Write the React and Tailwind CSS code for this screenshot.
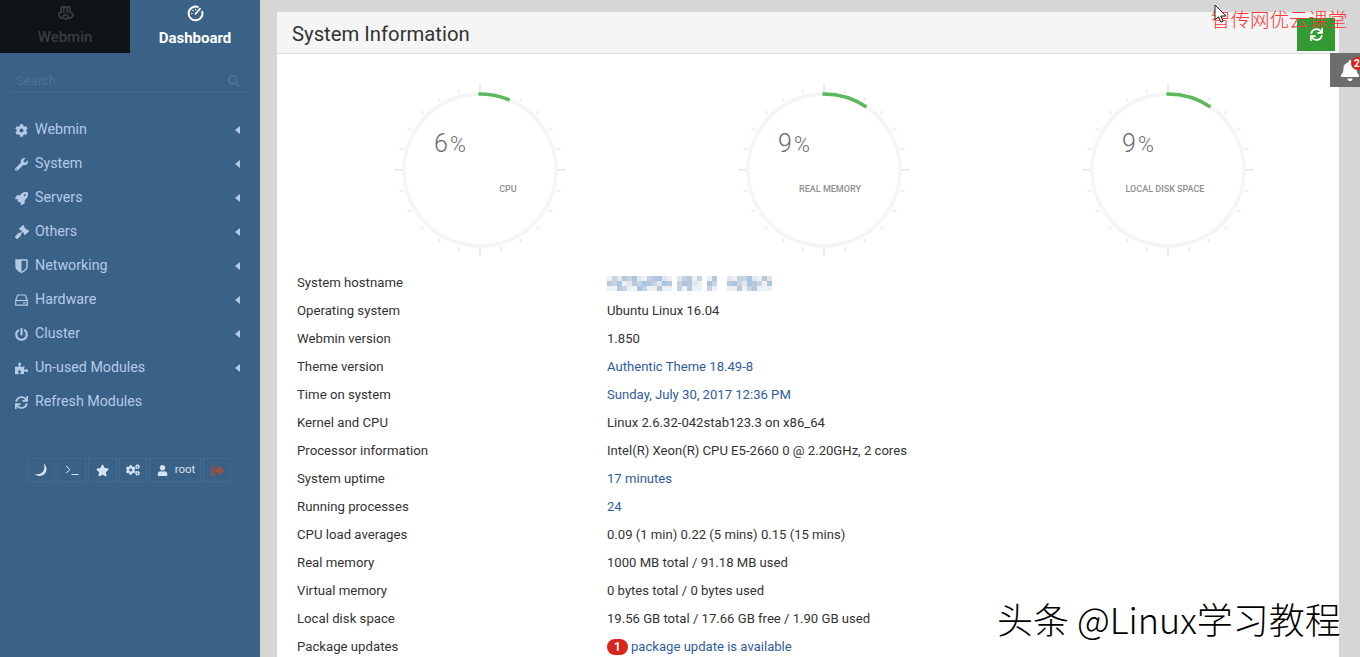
import {
  FaCog, FaWrench, FaRocket, FaGavel, FaPowerOff, FaPuzzlePiece, FaSync,
  FaStar, FaCogs, FaUser, FaSignOutAlt, FaBell, FaSearch,
} from 'react-icons/fa';

const ShieldIcon = () => (
  <svg width="13" height="14" viewBox="0 0 13 14">
    <path d="M1 1h11v6c0 3-3 5.2-5.5 6.3C4 12.2 1 10 1 7z" fill="none" stroke="currentColor" strokeWidth="1.4" />
    <path d="M1 1h5.5v12.3C4 12.2 1 10 1 7z" fill="currentColor" />
  </svg>
);

const HddIcon = () => (
  <svg width="13" height="12" viewBox="0 0 13 12" fill="none" stroke="currentColor" strokeWidth="1.2">
    <path d="M2.6 1h7.8l1.9 5.5v4.7H.7V6.5z" />
    <path d="M.7 6.5h11.6" />
    <path d="M8 8.9h2.6" />
  </svg>
);

const WebminLogo = () => (
  <svg width="19" height="16" viewBox="0 0 17 16" fill="none" stroke="currentColor" strokeWidth="1.8">
    <path d="M4.5 1h8l.7 5.2c2.2.6 3 2 2.5 3.8-.6 1.9-2.6 2.6-4.2 1.7-.8 1.7-4.2 1.7-5 0-1.6.9-3.6.2-4.2-1.7C1.3 8.2 2.1 6.8 3.8 6.2z" />
    <path d="M7 1.5 6.5 7M10 1.5 10.5 7M5.500 10.500 8.500 8.500 11.500 10.500" />
  </svg>
);

const DashIcon = () => (
  <svg width="17" height="17" viewBox="0 0 17 17" fill="none" stroke="currentColor">
    <path d="M11.5 2.2A6.9 6.9 0 1 0 15 6" strokeWidth="2" />
    <path d="M8 9.5 13.500 3.200" strokeWidth="1.8" />
    <path d="M4 8.500h1.500M5.500 5 6.500 6M8.500 3.800v1.500" strokeWidth="1.2" />
  </svg>
);

const MoonIcon = () => (
  <svg width="14" height="14" viewBox="0 0 13 13">
    <path d="M9 .5c3 2.500 3.500 6.500 1.200 9.300C8 12.600 3.500 13 .8 10.200 4.500 11 7.500 9.800 8.800 7.200 9.800 5 9.800 2.800 9 .5z" fill="currentColor" />
  </svg>
);

const TerminalIcon = () => (
  <svg width="14" height="10" viewBox="0 0 14 10" fill="none" stroke="currentColor" strokeWidth="1">
    <path d="M1 1l4 3.500L1 8M6.500 9.500H13.500" />
  </svg>
);

const CaretIcon = () => (
  <svg width="5" height="8" viewBox="0 0 5 8"><path d="M5 0v8L0 4z" fill="currentColor" /></svg>
);

const menu = [
  { label: 'Webmin', icon: <FaCog className="text-[13px]" />, arrow: true },
  { label: 'System', icon: <FaWrench className="text-[13px]" />, arrow: true },
  { label: 'Servers', icon: <FaRocket className="text-[13px]" />, arrow: true },
  { label: 'Others', icon: <FaGavel className="text-[14px]" />, arrow: true },
  { label: 'Networking', icon: <ShieldIcon />, arrow: true },
  { label: 'Hardware', icon: <HddIcon />, arrow: true },
  { label: 'Cluster', icon: <FaPowerOff className="text-[13px]" />, arrow: true },
  { label: 'Un-used Modules', icon: <FaPuzzlePiece className="text-[13px]" />, arrow: true },
  { label: 'Refresh Modules', icon: <FaSync className="text-[13px]" /> },
];

const rows = [
  { label: 'System hostname', blur: true },
  { label: 'Operating system', value: 'Ubuntu Linux 16.04' },
  { label: 'Webmin version', value: '1.850' },
  { label: 'Theme version', value: 'Authentic Theme 18.49-8', link: true },
  { label: 'Time on system', value: 'Sunday, July 30, 2017 12:36 PM', link: true },
  { label: 'Kernel and CPU', value: 'Linux 2.6.32-042stab123.3 on x86_64' },
  { label: 'Processor information', value: 'Intel(R) Xeon(R) CPU E5-2660 0 @ 2.20GHz, 2 cores' },
  { label: 'System uptime', value: '17 minutes', link: true },
  { label: 'Running processes', value: '24', link: true },
  { label: 'CPU load averages', value: '0.09 (1 min) 0.22 (5 mins) 0.15 (15 mins)' },
  { label: 'Real memory', value: '1000 MB total / 91.18 MB used' },
  { label: 'Virtual memory', value: '0 bytes total / 0 bytes used' },
  { label: 'Local disk space', value: '19.56 GB total / 17.66 GB free / 1.90 GB used' },
  { label: 'Package updates', pkg: true },
];

const gauges = [
  { value: 6, sweep: 23, label: 'CPU', labelClass: 'left-[94px] w-[40px]' },
  { value: 9, sweep: 34, label: 'REAL MEMORY', labelClass: 'left-[52px] w-[80px]' },
  { value: 9, sweep: 34, label: 'LOCAL DISK SPACE', labelClass: 'left-[33px] w-[100px]' },
];

// pixelated hostname: one string per row of 5px blocks
const blocks = [
  '4102130412304 01241 42  041130420',
  '2134021321032 13204 31  231032143',
  '4421443144244 14244 14  442412444',
];
const blockColors = { 0: '#dfe6ef', 1: '#c8d3e2', 2: '#b9c7da', 3: '#a8c6e2', 4: '#edf1f6' };

function Gauge({ value, sweep, label, labelClass }) {
  const ticks = Array.from({ length: 24 }, (_, i) => i * 15);
  const r = 76;
  const end = (sweep * Math.PI) / 180;
  const startX = -1.5;
  return (
    <div className="relative h-[172px] w-[172px] mx-auto">
      <svg width="172" height="172" viewBox="-86 -86 172 172">
        <circle r={r} fill="none" stroke="#f5f5f5" strokeWidth="4" />
        {ticks.map((a) => (
          <line
            key={a}
            x1="0"
            x2="0"
            y1={a % 90 === 0 ? -78 : -79.5}
            y2={a % 90 === 0 ? -86 : -83.5}
            stroke={a % 90 === 0 ? '#d8d8d8' : '#e2e2e2'}
            strokeWidth="1"
            transform={`rotate(${a})`}
          />
        ))}
        <path
          d={`M${startX} ${-r} A${r} ${r} 0 0 1 ${r * Math.sin(end)} ${-r * Math.cos(end)}`}
          fill="none"
          stroke="#5cb85c"
          strokeWidth="3.5"
        />
      </svg>
      <div className="absolute top-[45px] left-[40px] text-[#6b6b6b] flex items-baseline">
        <span className="text-[25px] leading-[30px] font-light">{value}</span>
        <span className="ml-[2px] text-[21.5px] leading-[30px] font-light">%</span>
      </div>
      <div className={`absolute top-[99px] text-center text-[9px] leading-[12px] font-medium text-[#8f8f8f] whitespace-nowrap ${labelClass}`}>
        {label}
      </div>
    </div>
  );
}

function Sidebar() {
  const btn = 'h-[24px] border border-[#436b90] flex items-center justify-center';
  return (
    <aside className="w-[260px] shrink-0 bg-[#3a6186] flex flex-col">
      <div className="flex h-[53px]">
        <div className="w-[130px] bg-[#0f1416] flex flex-col items-center text-[#383d42]">
          <div className="mt-[6px]"><WebminLogo /></div>
          <span className="mt-[5px] text-[15px] leading-[20px] font-medium">Webmin</span>
        </div>
        <div className="w-[130px] flex flex-col items-center text-white">
          <div className="mt-[5px]"><DashIcon /></div>
          <span className="mt-[6px] text-[15px] leading-[20px] font-bold">Dashboard</span>
        </div>
      </div>

      <div className="mx-[10px] mt-[16px] h-[24px] border-b border-[#436b90] flex items-center justify-between pl-[6px] pr-[10px]">
        <span className="text-[13px] text-[#4c7397]">Search</span>
        <FaSearch className="text-[12px] text-[#4c7397]" />
      </div>

      <nav className="mt-[20px]">
        {menu.map(({ label, icon, arrow }) => (
          <div key={label} className="h-[34px] flex items-center pl-[15px] pr-[20px] text-[#b3cbe6]">
            <span className="w-[20px] flex">{icon}</span>
            <span className="text-[14.25px] flex-1">{label}</span>
            {arrow && <CaretIcon />}
          </div>
        ))}
      </nav>

      <div className="mt-[39px] ml-[27px] flex items-center gap-[2px] text-[#d7e2ee]">
        <div className={`${btn} w-[28px]`}><MoonIcon /></div>
        <div className={`${btn} w-[29px]`}><TerminalIcon /></div>
        <div className={`${btn} w-[29px]`}><FaStar className="text-[13px]" /></div>
        <div className={`${btn} w-[28px]`}><FaCogs className="text-[14px]" /></div>
        <div className={`${btn} w-[52px] gap-[7px] pl-[2px] text-[11.5px]`}><FaUser className="text-[11px]" />root</div>
        <div className={`${btn} w-[28px] text-[#a0503f]`}><FaSignOutAlt className="text-[13px]" /></div>
      </div>
    </aside>
  );
}

function Hostname() {
  return (
    <svg width="168" height="15" className="mt-[1px]">
      {blocks.map((row, y) =>
        row.split('').map((c, x) =>
          c === ' ' ? null : <rect key={`${y}-${x}`} x={x * 5} y={y * 5} width="5" height="5" fill={blockColors[c]} />
        )
      )}
    </svg>
  );
}

export default function App() {
  return (
    <div className="relative flex h-[657px] w-[1360px] overflow-hidden bg-[#d6d6d6] text-[13.2px] font-['Roboto',sans-serif]">
      <Sidebar />

      <main className="ml-[17px] mt-[12px] w-[1062px] bg-white">
        <header className="h-[42px] bg-[#f5f5f5] border-b border-[#dddddd] flex items-center justify-between pl-[15px] pr-[4px]">
          <h1 className="mt-[3px] text-[20.3px] text-[#333333]">System Information</h1>
          <button className="mt-[3px] h-[33px] w-[38px] bg-[#339933] flex items-center justify-center text-white">
            <FaSync className="text-[13px]" />
          </button>
        </header>

        <div className="grid grid-cols-3 w-[1032px] ml-[31px] mt-[30px]">
          {gauges.map((g) => <Gauge key={g.label} {...g} />)}
        </div>

        <div className="mt-[13px] pl-[20px]">
          {rows.map((row) => (
            <div key={row.label} className="h-[28px] flex items-center text-[#333333]">
              <div className="w-[310px]">{row.label}</div>
              {row.blur && <Hostname />}
              {row.value && <div className={row.link ? 'text-[13.1px] text-[#2f5c9e]' : 'text-[13.1px]'}>{row.value}</div>}
              {row.pkg && (
                <div className="flex items-center text-[13.1px] text-[#2f5c9e]">
                  <span className="mr-[3px] h-[16px] w-[21px] rounded-full bg-[#d9261c] text-white text-[12px] font-bold flex items-center justify-center">1</span>
                  package update is available
                </div>
              )}
            </div>
          ))}
        </div>
      </main>

      <div className="absolute right-0 top-[53px] h-[34px] w-[30px] bg-[#6d6d6d] flex items-center text-white">
        <FaBell className="text-[21px] ml-[10px]" />
        <span className="absolute left-[21px] top-[4px] h-[13px] w-[13px] rounded-full bg-[#d9261c] text-[10px] leading-[13px] font-bold pl-[3px]">2</span>
      </div>

      <div className="absolute left-[1211px] top-[6px] text-[19.5px] leading-[26px] text-[#ff3535] font-light whitespace-nowrap font-['Noto_Sans_CJK_SC',sans-serif]">智传网优云课堂</div>

      <svg className="absolute left-[1214px] top-[4px]" width="14" height="20" viewBox="0 0 14 20">
        <path d="M1 1v15l3.5-3.2 2.4 5.4 2.2-1-2.4-5.2H12z" fill="#ffffff" stroke="#222222" strokeWidth="1" />
      </svg>

      <div className="absolute left-[997px] top-[594px] text-[36px] leading-[48px] text-black whitespace-nowrap [text-shadow:1px_1px_0_#ffffff] font-['Noto_Sans_CJK_SC',sans-serif] font-light">头条 @Linux学习教程</div>
    </div>
  );
}
